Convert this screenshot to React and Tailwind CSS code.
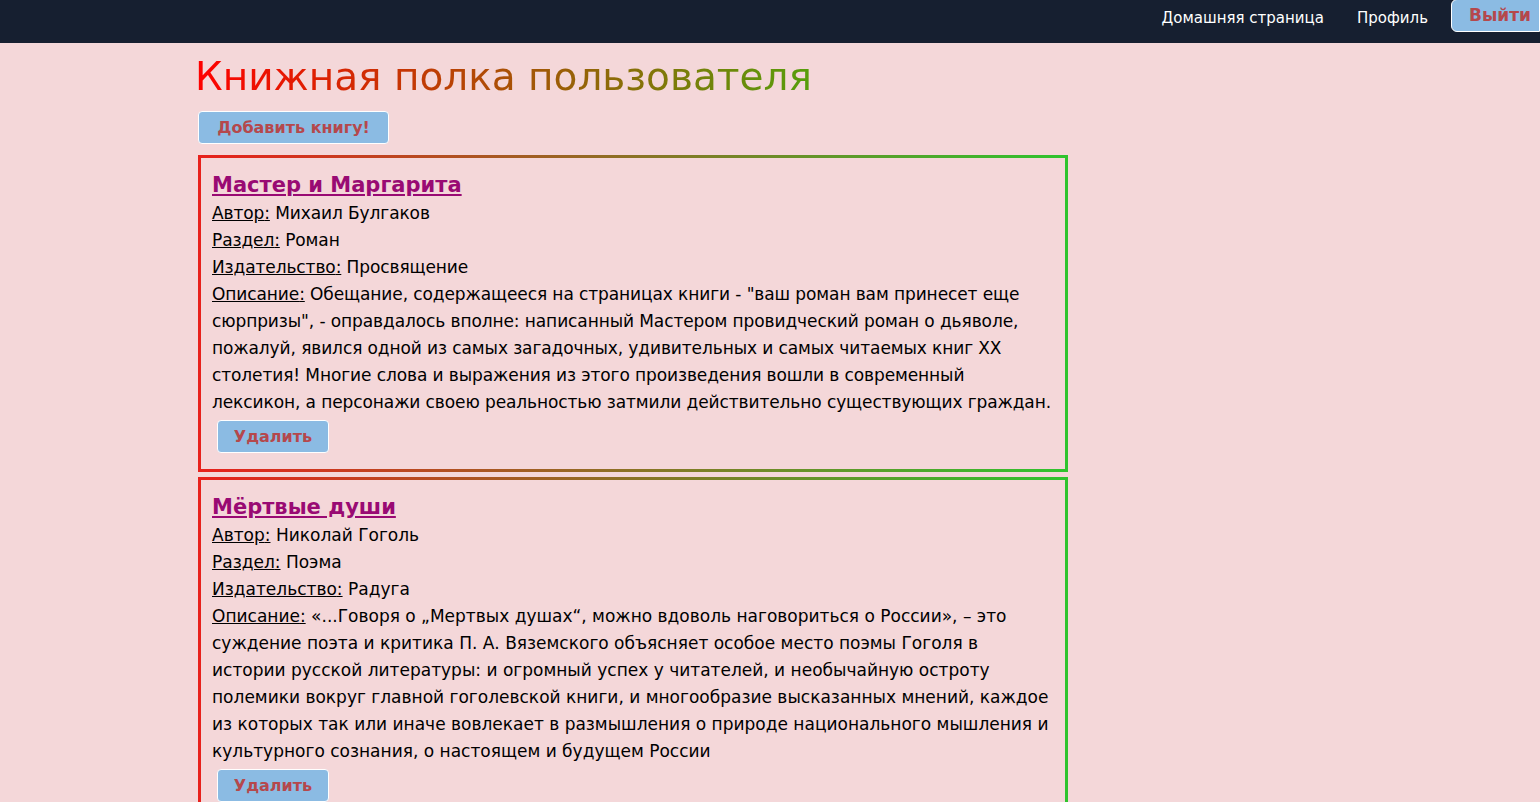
import React from "react";

const books = [
  {
    title: "Мастер и Маргарита",
    author: "Михаил Булгаков",
    section: "Роман",
    publisher: "Просвящение",
    tracking: "tracking-[-0.1px]",
    description:
      "Обещание, содержащееся на страницах книги - \"ваш роман вам принесет еще сюрпризы\", - оправдалось вполне: написанный Мастером провидческий роман о дьяволе, пожалуй, явился одной из самых загадочных, удивительных и самых читаемых книг XX столетия! Многие слова и выражения из этого произведения вошли в современный лексикон, а персонажи своею реальностью затмили действительно существующих граждан.",
  },
  {
    title: "Мёртвые души",
    author: "Николай Гоголь",
    section: "Поэма",
    publisher: "Радуга",
    tracking: "tracking-normal",
    description:
      "«...Говоря о „Мертвых душах“, можно вдоволь наговориться о России», – это суждение поэта и критика П. А. Вяземского объясняет особое место поэмы Гоголя в истории русской литературы: и огромный успех у читателей, и необычайную остроту полемики вокруг главной гоголевской книги, и многообразие высказанных мнений, каждое из которых так или иначе вовлекает в размышления о природе национального мышления и культурного сознания, о настоящем и будущем России",
  },
];

const comic = "font-['Comic_Sans_MS','DejaVu_Sans',sans-serif]";
const verdana = "font-['Verdana','DejaVu_Sans',sans-serif]";

function Field({ label, children }) {
  return (
    <div>
      <span className="underline">{label}:</span> {children}
    </div>
  );
}

function BookCard({ book }) {
  return (
    <div className="bg-linear-to-r/srgb from-[#e8201c] to-[#2ec42e] p-[3px]">
      <div className="bg-[#f4d7d9] px-[11px] pt-[12px] pb-[16px]">
        <a
          href="#"
          className={`${verdana} block text-[21px] font-bold leading-[30px] text-[#990a73] underline`}
        >
          {book.title}
        </a>
        <div className={`${comic} text-[17px] leading-[27px] text-black ${book.tracking}`}>
          <Field label="Автор">{book.author}</Field>
          <Field label="Раздел">{book.section}</Field>
          <Field label="Издательство">{book.publisher}</Field>
          <Field label="Описание">{book.description}</Field>
        </div>
        <button
          className={`${verdana} mt-[4px] ml-[5px] h-[33px] w-[112px] rounded-[4px] border border-white bg-[#8bbbe3] text-[16px] font-bold text-[#b5484c]`}
        >
          Удалить
        </button>
      </div>
    </div>
  );
}

export default function App() {
  return (
    <div className="min-h-screen w-full bg-[#f4d7d9]">
      <nav className={`${verdana} flex h-[43px] items-start justify-end bg-[#161f30] text-[15px] text-white`}>
        <a href="#" className="mt-[7px] leading-[22px]">
          Домашняя страница
        </a>
        <a href="#" className="mt-[7px] ml-[33px] leading-[22px]">
          Профиль
        </a>
        <button className="ml-[23px] -mt-[1px] h-[33px] w-[89px] rounded-l-[6px] border border-white bg-[#8bbbe3] pl-[17px] text-left text-[17px] font-bold text-[#b5484c]">
          Выйти
        </button>
      </nav>

      <main className="ml-[195px] w-[873px]">
        <h1
          className={`${comic} mt-[8px] bg-linear-to-r/srgb from-[#ff0000] to-[#10e010] bg-clip-text text-[39px] leading-[52px] text-transparent`}
        >
          Книжная полка пользователя
        </h1>
        <button
          className={`${verdana} mt-[8px] ml-[3px] h-[33px] w-[191px] rounded-[4px] border border-white bg-[#8bbbe3] text-[16px] font-bold text-[#b5484c]`}
        >
          Добавить книгу!
        </button>
        <div className="mt-[11px] ml-[3px] flex flex-col gap-[5px]">
          {books.map((b) => (
            <BookCard key={b.title} book={b} />
          ))}
        </div>
      </main>
    </div>
  );
}
